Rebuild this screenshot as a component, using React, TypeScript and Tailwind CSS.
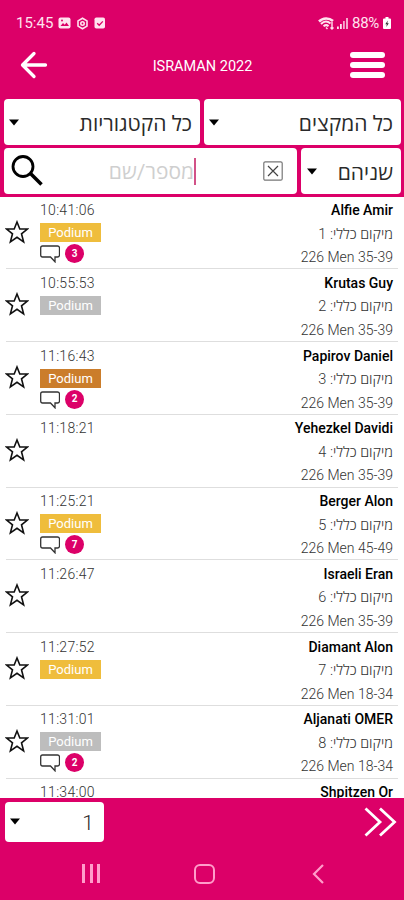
import type { ReactNode } from "react";

interface Result {
	name: string;
	time: string;
	place: number;
	category: string;
	podium?: "gold" | "silver" | "bronze";
	comments?: number;
}

const results: Result[] = [
	{ name: "Alfie Amir", time: "10:41:06", place: 1, category: "226 Men 35-39", podium: "gold", comments: 3 },
	{ name: "Krutas Guy", time: "10:55:53", place: 2, category: "226 Men 35-39", podium: "silver" },
	{ name: "Papirov Daniel", time: "11:16:43", place: 3, category: "226 Men 35-39", podium: "bronze", comments: 2 },
	{ name: "Yehezkel Davidi", time: "11:18:21", place: 4, category: "226 Men 35-39" },
	{ name: "Berger Alon", time: "11:25:21", place: 5, category: "226 Men 45-49", podium: "gold", comments: 7 },
	{ name: "Israeli Eran", time: "11:26:47", place: 6, category: "226 Men 35-39" },
	{ name: "Diamant Alon", time: "11:27:52", place: 7, category: "226 Men 18-34", podium: "gold" },
	{ name: "Aljanati OMER", time: "11:31:01", place: 8, category: "226 Men 18-34", podium: "silver", comments: 2 },
];

const nextResult = { name: "Shpitzen Or", time: "11:34:00" };

const podiumColors = {
	gold: "bg-[#efbd3c]",
	silver: "bg-[#bdbdbd]",
	bronze: "bg-[#cb7d2b]",
};

const Caret = () => (
	<svg className="h-[7px] w-[10px] shrink-0" viewBox="0 0 10 7">
		<path d="M0 0.5H10L5 6.5Z" fill="#000" />
	</svg>
);

const SelectBox = ({ className, children }: { className: string; children: ReactNode }) => (
	<button
		className={`flex items-center justify-between rounded-[4px] bg-white text-[21px] leading-none text-[#2a2a2a] ${className}`}
	>
		<Caret />
		<span dir="rtl" className="pt-1">
			{children}
		</span>
	</button>
);

const StatusBar = () => (
	<div className="flex h-[46px] items-center justify-between pr-[13px] pl-4 text-[#ffe3ef]">
		<div className="flex items-center">
			<span className="w-[37px] text-[15px]">15:45</span>
			<svg className="ml-[5px] h-3 w-[13px]" viewBox="0 0 13 12">
				<rect x="0.5" y="0.5" width="12" height="11" rx="2" fill="currentColor" />
				<path d="M2.5 9 5 6l1.7 1.8L8.5 5.5 11 9Z" fill="#dc0068" />
				<circle cx="4" cy="3.5" r="1" fill="#dc0068" />
			</svg>
			<svg className="ml-[5px] h-[13px] w-[13px]" viewBox="0 0 13 13" fill="none" stroke="currentColor">
				<path d="M6.5 1.2 11 3.9V9.1L6.5 11.8 2 9.1V3.9Z" strokeWidth="1.6" />
				<circle cx="6.5" cy="6.5" r="1.7" strokeWidth="1.6" />
			</svg>
			<svg className="ml-[5px] h-3 w-3" viewBox="0 0 12 12">
				<rect x="0.5" y="0.5" width="10.5" height="11" rx="1.8" fill="currentColor" />
				<path d="m3.2 6.2 2 2 3.6-3.8" fill="none" stroke="#dc0068" strokeWidth="1.3" />
			</svg>
		</div>
		<div className="flex items-center">
			<svg className="h-[13px] w-[16px]" viewBox="0 0 16 13" fill="none" stroke="currentColor">
				<path d="M1 4.5C5 0.5 11 0.5 15 4" strokeWidth="2.6" />
				<path d="M3 7c3-3 6.5-3 9.5-.5M5.5 9.2c2-1.500 3.500-1.500 5 0" strokeWidth="2" />
				<path d="M8 10.5 9.5 12M14 5v7M12.5 10.5l1.5 1.5 1.5-1.5" strokeWidth="1.4" />
			</svg>
			<svg className="ml-[3px] h-3 w-[12px]" viewBox="0 0 12 12" fill="currentColor">
				<path d="M0 9.500h1.800V12H0ZM3 7h1.800v5H3Z" />
				<path d="M6 4h1.800v8H6ZM9 1h2v11H9Z" opacity="0.75" />
			</svg>
			<span className="ml-[3px] w-[29px] text-[15px] tracking-[-0.3px]">88%</span>
			<svg className="ml-[2px] h-3 w-[8px]" viewBox="0 0 8 12">
				<path d="M2.500 0h3v1.500H7q1 0 1 1V11q0 1-1 1H1q-1 0-1-1V2.500q0-1 1-1h1.500Z" fill="#fff" />
				<path d="M4.800 3.500 2.300 7.200h1.500L3.300 10l2.500-3.800H4.300Z" fill="#333" />
			</svg>
		</div>
	</div>
);

const Header = () => (
	<header className="flex h-[53px] items-start justify-between pr-[19px] pl-[20px]">
		<svg className="mt-[5px] h-7 w-7" viewBox="0 0 28 28" fill="none" stroke="#fff" strokeWidth="3.3" strokeLinecap="round" strokeLinejoin="round">
			<path d="M14 2.5 2.5 14 14 25.500M3 14H25.500" />
		</svg>
		<h1 className="mt-[11px] ml-[7px] text-[14.5px] leading-5 text-white">ISRAMAN 2022</h1>
		<div className="mt-[6px] flex w-[35px] flex-col gap-[4px]">
			<span className="h-[6px] rounded-full bg-white" />
			<span className="h-[6px] rounded-full bg-white" />
			<span className="h-[6px] rounded-full bg-white" />
		</div>
	</header>
);

const Filters = () => (
	<div className="flex h-[97.5px] flex-col gap-[3px] pr-[3px] pl-[4px]">
		<div className="flex h-[46px] gap-[4px]">
			<SelectBox className="w-[196px] pr-[8px] pl-[5px]">כל הקטגוריות</SelectBox>
			<SelectBox className="flex-1 pr-[8px] pl-[5px]">כל המקצים</SelectBox>
		</div>
		<div className="flex h-[46px] gap-[4px]">
			<div className="flex flex-1 items-center rounded-[4px] bg-white pr-[14px] pl-[7px]">
				<svg className="h-8 w-8" viewBox="0 0 32 32" fill="none" stroke="#000">
					<circle cx="12" cy="11.5" r="10" strokeWidth="2.8" />
					<path d="m19.5 18.5 11 11" strokeWidth="3.5" />
				</svg>
				<div className="flex flex-1 items-center justify-end">
					<span dir="rtl" className="pt-[3px] text-[21px] leading-none text-[#cfcfcf]">
						מספר/שם
					</span>
					<span className="h-[27px] w-[2px] bg-[#d25288]" />
				</div>
				<svg className="ml-[67px] h-[20px] w-[20px]" viewBox="0 0 20 20" fill="none" stroke="#444">
					<rect x="0.8" y="0.8" width="18.4" height="18.4" rx="1.5" strokeWidth="1.2" stroke="#777" />
					<path d="m5 5 10 10M15 5 5 15" strokeWidth="1.2" />
				</svg>
			</div>
			<SelectBox className="w-[100px] pr-[8px] pl-[6px]">שניהם</SelectBox>
		</div>
	</div>
);

const Star = () => (
	<svg className="mt-[20.5px] -ml-[1px] h-6 w-6" viewBox="0 0 24 24" fill="none" stroke="#111" strokeWidth="1.6">
		<path d="M12 2 14.8 9H22.4L16.5 13.8 18.6 21.8 12 17.3 5.4 21.8 7.5 13.8 1.6 9H9.2Z" />
	</svg>
);

const ResultRow = ({ result }: { result: Result }) => (
	<li className="mx-[6px] flex h-[72.75px] shrink-0 border-b border-[#dedede] pt-[2.5px] text-[14px] leading-[23.5px]">
		<Star />
		<div className="ml-[11px] w-[61px]">
			<div className="h-[24px] text-[14px] font-light tracking-[0.3px] text-[#333]">{result.time}</div>
			{result.podium && (
				<div className={`h-[19px] text-center text-[13px] leading-[20px] text-white ${podiumColors[result.podium]}`}>
					Podium
				</div>
			)}
			{result.comments && (
				<div className="mt-[2px] flex items-center">
					<svg className="h-[19px] w-[20px]" viewBox="0 0 20 19" fill="none" stroke="#333" strokeWidth="1.3">
						<path d="M2.5 2H17.5Q19.5 2 19.5 4V11Q19.5 13 17.5 13H15V17.8L10.5 13H2.5Q0.7 13 0.7 11V4Q0.7 2 2.5 2Z" />
					</svg>
					<span className="ml-[5px] flex h-[19px] w-[19px] items-center justify-center rounded-full bg-[#dc0068] text-[10px] font-bold text-white">
						{result.comments}
					</span>
				</div>
			)}
		</div>
		<div className="mr-[5px] ml-auto text-right text-[#333]">
			<div className="font-medium text-black">{result.name}</div>
			<div dir="rtl" className="text-[14.5px] font-light">
				מיקום כללי: {result.place}
			</div>
			<div className="font-light">{result.category}</div>
		</div>
	</li>
);

const Pager = () => (
	<div className="flex h-[46px] items-start justify-between pt-[4px] pr-[7px] pl-[5px]">
		<SelectBox className="h-[40px] w-[99px] pr-[10px] pl-[5px] font-light">1</SelectBox>
		<svg className="mt-[4px] h-[32px] w-[34px]" viewBox="0 0 34 32" fill="none" stroke="#fff" strokeWidth="2.8">
			<path d="M2.5 2.5 17 16 2.5 29.5M17 2.5 31.5 16 17 29.5" />
		</svg>
	</div>
);

const SystemNav = () => (
	<nav className="flex flex-1 items-center justify-between pt-[4px] pr-[80px] pl-[82px] text-[#ff9dca]">
		<div className="flex gap-[4.5px]">
			<span className="h-[19px] w-[3px] bg-current" />
			<span className="h-[19px] w-[3px] bg-current" />
			<span className="h-[19px] w-[3px] bg-current" />
		</div>
		<span className="mr-[3px] h-[20px] w-[21px] rounded-[6px] border-[2.5px] border-current" />
		<svg className="h-5 w-[12px]" viewBox="0 0 12 20" fill="none" stroke="currentColor" strokeWidth="2.2">
			<path d="M11 1 2 10l9 9" />
		</svg>
	</nav>
);

export default function App() {
	return (
		<div className="flex h-[900px] w-[404px] flex-col overflow-hidden bg-[#dc0068] font-[Roboto,'Open_Sans','Noto_Sans',sans-serif]">
			<StatusBar />
			<Header />
			<Filters />
			<ul className="flex h-[601px] flex-col overflow-hidden bg-white">
				{results.map((result) => (
					<ResultRow key={result.name} result={result} />
				))}
				<li className="mr-[11px] ml-[40px] flex justify-between pt-[2.5px] text-[14px] leading-[23.5px]">
					<span className="font-light tracking-[0.3px] text-[#333]">{nextResult.time}</span>
					<span className="font-medium text-black">{nextResult.name}</span>
				</li>
			</ul>
			<Pager />
			<SystemNav />
		</div>
	);
}
